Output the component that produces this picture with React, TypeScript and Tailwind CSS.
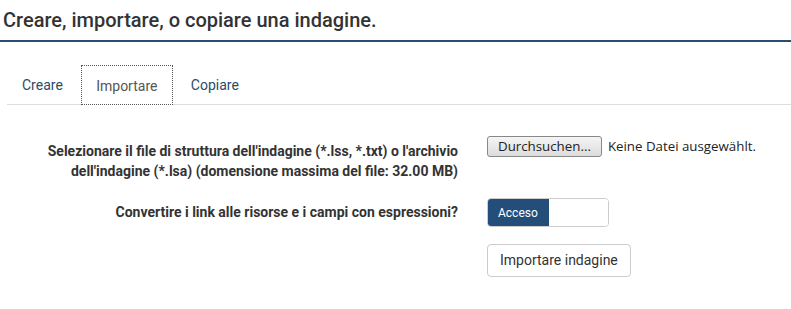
export default function App() {
  return (
    <div className="w-[791px] h-[309px] bg-white font-['Roboto',sans-serif] text-[#333] overflow-hidden">
      <div className="border-b-2 border-[#2b4d6e] pl-[3px] pt-[8px] pb-[8px]">
        <h1 className="text-[20px] font-medium leading-[24px] text-[#333]">Creare, importare, o copiare una indagine.</h1>
      </div>

      <div className="mt-[21px] ml-[7px] flex border-b border-[#ddd] text-[14px] h-[42px]">
        <div className="px-[15px] pt-[12px] text-[#2c4b6b]">Creare</div>
        <div className="ml-[3px] mt-[2px] mb-[-1px] w-[92px] border border-dotted border-[#555] bg-white pt-[10px] text-center text-[#555]">Importare</div>
        <div className="px-[18px] pt-[12px] text-[#2c4b6b]">Copiare</div>
      </div>

      <div className="mt-[31px] grid grid-cols-[473px_1fr] gap-y-[17px] text-[14px]">
        <label className="pr-[15px] pt-[5px] text-right font-bold leading-[20px]">
          Selezionare il file di struttura dell'indagine (*.lss, *.txt) o l'archivio dell'indagine (*.lsa) (domensione massima del file: 32.00 MB)
        </label>
        <div className="pl-[14px] flex items-start gap-[6px] font-['Open_Sans',sans-serif] text-[13.3px] text-[#222]">
          <button className="h-[21px] rounded-[3px] border border-[#888] bg-gradient-to-b from-[#f5f5f5] to-[#dcdcdc] px-[10px] leading-[19px]">Durchsuchen...</button>
          <span className="leading-[21px]">Keine Datei ausgewählt.</span>
        </div>

        <label className="pr-[15px] text-right font-bold leading-[29px]">Convertire i link alle risorse e i campi con espressioni?</label>
        <div className="pl-[14px]">
          <div className="flex h-[29px] w-[122px] overflow-hidden rounded-[4px] border border-[#ccc] text-[12px]">
            <div className="flex w-[61px] items-center bg-[#234e79] pl-[10px] text-white">Acceso</div>
            <div className="flex-1 bg-white"></div>
          </div>
        </div>

        <div></div>
        <div className="pl-[14px]">
          <button className="h-[33px] rounded-[4px] border border-[#ccc] bg-white px-[12px] text-[14px] text-[#333]">Importare indagine</button>
        </div>
      </div>
    </div>
  );
}
